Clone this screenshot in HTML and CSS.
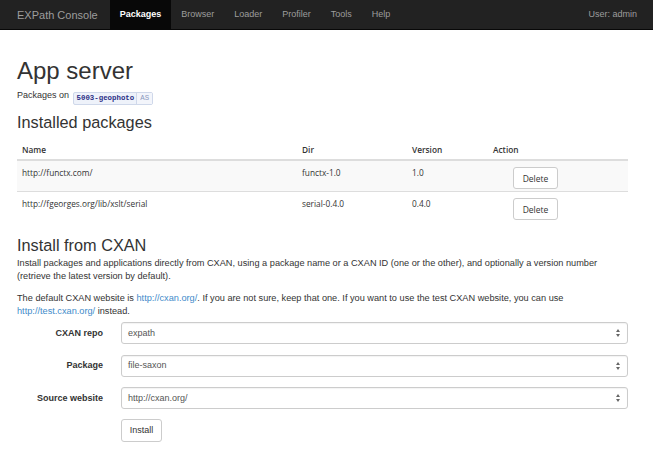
FILE: index.html
```html
<!DOCTYPE html>
<html>
<head>
<meta charset="utf-8">
<link rel="stylesheet" href="styles.css">
</head>
<body>
<nav class="navbar">
  <a class="brand">EXPath Console</a>
  <ul class="nav">
    <li class="active"><a>Packages</a></li>
    <li><a>Browser</a></li>
    <li><a>Loader</a></li>
    <li><a>Profiler</a></li>
    <li><a>Tools</a></li>
    <li><a>Help</a></li>
  </ul>
  <div class="user">User: admin</div>
</nav>
<main class="container">
  <h1>App server</h1>
  <p class="sub">Packages on <span class="badge"><code>5003-geophoto</code><span class="badge-tag">AS</span></span></p>
  <h3 class="h-installed">Installed packages</h3>
  <table class="table">
    <thead>
      <tr><th class="c-name">Name</th><th class="c-dir">Dir</th><th class="c-ver">Version</th><th>Action</th></tr>
    </thead>
    <tbody>
      <tr class="odd"><td>http://functx.com/</td><td>functx-1.0</td><td>1.0</td><td class="act"><button class="btn btn-t">Delete</button></td></tr>
      <tr><td>http://fgeorges.org/lib/xslt/serial</td><td>serial-0.4.0</td><td>0.4.0</td><td class="act"><button class="btn btn-t">Delete</button></td></tr>
    </tbody>
  </table>
  <h3 class="h-install">Install from CXAN</h3>
  <p class="p1">Install packages and applications directly from CXAN, using a package name or a CXAN ID (one or the other), and optionally a version number (retrieve the latest version by default).</p>
  <p class="p2">The default CXAN website is <a class="link">http://cxan.org/</a>. If you are not sure, keep that one. If you want to use the test CXAN website, you can use <a class="link">http://test.cxan.org/</a> instead.</p>
  <form class="form">
    <div class="row"><label>CXAN repo</label><div class="select"><span>expath</span><span class="arrows"></span></div></div>
    <div class="row"><label>Package</label><div class="select"><span>file-saxon</span><span class="arrows"></span></div></div>
    <div class="row"><label>Source website</label><div class="select"><span>http://cxan.org/</span><span class="arrows"></span></div></div>
    <div class="row row-btn"><label></label><button type="button" class="btn btn-install">Install</button></div>
  </form>
</main>
</body>
</html>
```
FILE: styles.css
```css
html, body { margin: 0; padding: 0; }
body {
  font-family: "Liberation Sans", Arial, sans-serif;
  font-size: 9px;
  line-height: 13px;
  color: #333;
  background: #fff;
}
.navbar {
  display: flex;
  align-items: stretch;
  height: 30px;
  background: #222;
  border-bottom: 1px solid #080808;
  box-sizing: border-box;
}
.brand {
  color: #9d9d9d;
  font-size: 11px;
  line-height: 30px;
  padding: 0 12px 0 17px;
}
.nav {
  display: flex;
  list-style: none;
  margin: 0;
  padding: 0;
}
.nav li a {
  display: block;
  padding: 0 10px;
  line-height: 29px;
  color: #9d9d9d;
  font-size: 9px;
}
.nav li.active a {
  background: #080808;
  color: #fff;
  font-weight: bold;
}
.user {
  margin-left: auto;
  color: #9d9d9d;
  font-size: 9px;
  line-height: 29px;
  padding-right: 16px;
}
.container {
  padding: 0 25px 0 17px;
}
h1 {
  font-size: 24px;
  font-weight: normal;
  line-height: 28px;
  margin: 27px 0 0 0;
  color: #333;
}
.sub { margin: 4px 0 0 0; }
.badge {
  display: inline-flex;
  align-items: stretch;
  border: 1px solid #cfd8ea;
  border-radius: 2px;
  background: #eef2fa;
  height: 11px;
  line-height: 11px;
  vertical-align: -2px;
  margin-left: 1px;
}
.badge code {
  font-family: "Liberation Mono", monospace;
  font-weight: bold;
  font-size: 7.4px;
  color: #2b2f86;
  padding: 0 2px 0 3px;
}
.badge-tag {
  border-left: 1px solid #cfd8ea;
  color: #8d9ac0;
  font-family: "Liberation Mono", monospace;
  font-size: 7.4px;
  padding: 0 3px;
  background: #f3f5fb;
}
h3 {
  font-size: 16.3px;
  font-weight: normal;
  line-height: 20px;
  margin: 0;
  color: #333;
}
.h-installed { margin-top: 7px; }
.table {
  width: 100%;
  border-collapse: collapse;
  margin-top: 7px;
  font-family: "Open Sans", sans-serif;
  font-size: 8.3px;
  color: #333;
}
.table th {
  text-align: left;
  font-weight: 600;
  padding: 4px 5px 3px 5px;
  border-bottom: 2px solid #ddd;
  line-height: 13px;
}
.table td {
  padding: 5px 5px 2px 5px;
  vertical-align: top;
  border-top: 1px solid #ddd;
  line-height: 13px;
}
.table tbody tr:first-child td { border-top: 0; }
.table tr.odd td { background: #f9f9f9; }
.c-name { width: 270px; }
.c-dir { width: 100px; }
.c-ver { width: 71px; }
.act { padding-left: 25px !important; }
.btn {
  background: #fff;
  border: 1px solid #ccc;
  border-radius: 3px;
  color: #333;
  padding: 0;
  margin: 0;
  cursor: pointer;
}
.btn-t {
  font-family: "Open Sans", sans-serif;
  font-size: 8.5px;
  width: 45px;
  height: 22px;
  margin-top: 1px;
}
.h-install { margin-top: 13px; }
p { margin: 0; }
.p1, .p2 { font-size: 9.2px; }
.p1 { margin-top: 2px; }
.p2 { margin-top: 9px; }
.link { color: #428bca; }
.form { margin-top: 4px; }
.row {
  display: flex;
  align-items: center;
  margin-bottom: 10.5px;
}
.row-btn { margin-top: -1px; }
.row label {
  width: 86px;
  text-align: right;
  font-weight: bold;
  padding-right: 18px;
  flex: none;
}
.select {
  flex: 1;
  height: 22px;
  border: 1px solid #ccc;
  border-radius: 3px;
  box-sizing: border-box;
  display: flex;
  align-items: center;
  justify-content: space-between;
  padding: 0 6px 0 6px;
  color: #555;
  box-shadow: inset 0 1px 1px rgba(0,0,0,0.05);
}
.arrows {
  width: 5px;
  height: 8px;
  position: relative;
}
.arrows::before, .arrows::after {
  content: "";
  position: absolute;
  left: 0;
  border-left: 2.5px solid transparent;
  border-right: 2.5px solid transparent;
}
.arrows::before { top: 0; border-bottom: 3px solid #666; }
.arrows::after { bottom: 0; border-top: 3px solid #666; }
.btn-install {
  font-family: "Liberation Sans", Arial, sans-serif;
  font-size: 9px;
  width: 41px;
  height: 23px;
}
```
